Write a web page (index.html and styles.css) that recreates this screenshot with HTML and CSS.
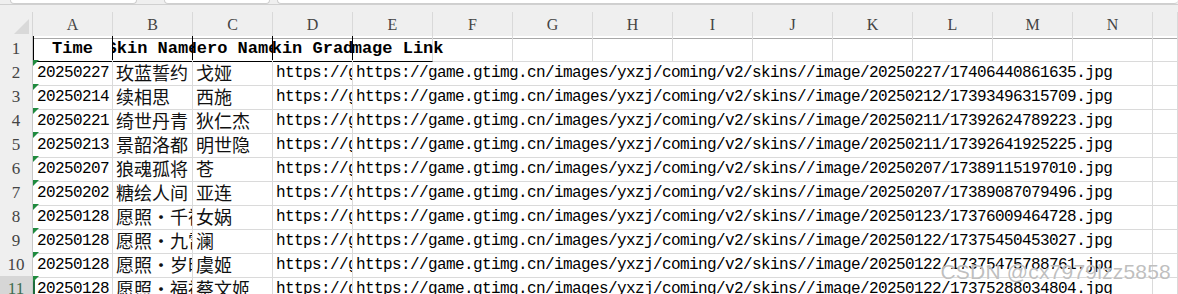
FILE: index.html
```html
<!DOCTYPE html>
<html lang="zh-CN">
<head>
    <meta charset="UTF-8">
    <title>skins.xlsx</title>
    <link rel="stylesheet" href="styles.css">
</head>
<body>
    <div class="tabs">
        <div class="tab tab-1"></div>
        <div class="tab tab-2"></div>
        <div class="tab tab-3"></div>
    </div>

    <div class="sheet" id="sheet">
        <div class="row col-head">
            <div class="corner"><div class="corner-mark"></div></div>
            <div class="ch">A</div>
            <div class="ch">B</div>
            <div class="ch">C</div>
            <div class="ch">D</div>
            <div class="ch">E</div>
            <div class="ch">F</div>
            <div class="ch">G</div>
            <div class="ch">H</div>
            <div class="ch">I</div>
            <div class="ch">J</div>
            <div class="ch">K</div>
            <div class="ch">L</div>
            <div class="ch">M</div>
            <div class="ch">N</div>
            <div class="ch"></div>
        </div>

        <div class="row">
            <div class="rh">1</div>
            <div class="c hd first"><span>Time</span></div>
            <div class="c hd"><span>Skin Name</span></div>
            <div class="c hd"><span>Hero Name</span></div>
            <div class="c hd"><span>Skin Grade</span></div>
            <div class="c hd last"><span>Image Link</span></div>
            <div class="c"></div>
            <div class="c"></div>
            <div class="c"></div>
            <div class="c"></div>
            <div class="c"></div>
            <div class="c"></div>
            <div class="c"></div>
            <div class="c"></div>
            <div class="c"></div>
            <div class="c"></div>
        </div>
    </div>

    <div class="watermark">CSDN @cx7979lzz5858</div>

    <script>
        const rows = [
            ['20250227', '玫蓝誓约', '戈娅', '20250227/17406440861635'],
            ['20250214', '续相思', '西施', '20250212/17393496315709'],
            ['20250221', '绮世丹青', '狄仁杰', '20250211/17392624789223'],
            ['20250213', '景韶洛都', '明世隐', '20250211/17392641925225'],
            ['20250207', '狼魂孤将', '苍', '20250207/17389115197010'],
            ['20250202', '糖绘人间', '亚连', '20250207/17389087079496'],
            ['20250128', '愿照・千禧', '女娲', '20250123/17376009464728'],
            ['20250128', '愿照・九霄', '澜', '20250122/17375450453027'],
            ['20250128', '愿照・岁时', '虞姬', '20250122/17375475788761'],
            ['20250128', '愿照・福禄', '蔡文姬', '20250122/17375288034804']
        ];

        const base = 'https://game.gtimg.cn/images/yxzj/coming/v2/skins//image/';
        const sheet = document.getElementById('sheet');
        let html = '';

        rows.forEach(function(r, i) {
            const n = i + 2;
            const active = n === 11 ? ' active' : '';
            html += `
                <div class="row${active}">
                    <div class="rh">${n}</div>
                    <div class="c num flag">${r[0]}</div>
                    <div class="c cjk">${r[1]}</div>
                    <div class="c cjk">${r[2]}</div>
                    <div class="c url">https://g</div>
                    <div class="c url wide">${base}${r[3]}.jpg</div>
                    <div class="c"></div>
                </div>
            `;
        });

        sheet.insertAdjacentHTML('beforeend', html);
    </script>
</body>
</html>
```

FILE: styles.css
```css
body {
    margin: 0;
    background-color: #ffffff;
    overflow: hidden;
    font-family: "Liberation Mono", monospace;
    color: #000;
}

/* sheet tabs strip at the very top */
.tabs {
    display: flex;
    height: 4px;
    background-color: #efefef;
    border-bottom: 1px solid #d0d0d0;
    overflow: hidden;
}

.tab {
    height: 3px;
    background-color: #ffffff;
    border: 1px solid #cfcfcf;
    border-top: none;
    border-radius: 0 0 6px 6px;
}

.tab-1 {
    margin-left: 10px;
    width: 125px;
}

.tab-2 {
    margin-left: 27px;
    width: 104px;
}

.tab-3 {
    margin-left: 7px;
    flex: 1;
    border-right: none;
}

.sheet {
    background-color: #efefef;
    padding-top: 7px;
}

.row {
    display: grid;
    grid-template-columns: 33px repeat(14, 80px) 1fr;
    height: 24px;
    background-color: #ffffff;
}

/* column letters */
.col-head {
    background-color: #efefef;
}

.corner {
    display: flex;
    justify-content: flex-end;
    align-items: flex-end;
    padding: 0 3px 4px 0;
    border-bottom: 1px solid #a8a8a8;
    border-right: 1px solid #d6d6d6;
}

.corner-mark {
    width: 0;
    height: 0;
    border-left: 15px solid transparent;
    border-bottom: 15px solid #d9d9d9;
}

.ch {
    box-sizing: border-box;
    border-right: 1px solid #d9d9d9;
    border-bottom: 1px solid #a8a8a8;
    font-family: "Liberation Serif", serif;
    font-size: 16px;
    color: #444;
    text-align: center;
    line-height: 26px;
}

/* row numbers */
.rh {
    box-sizing: border-box;
    background-color: #efefef;
    border-right: 1px solid #c8c8c8;
    border-bottom: 1px solid #d9d9d9;
    font-family: "Liberation Serif", serif;
    font-size: 17px;
    color: #444;
    text-align: center;
    line-height: 25px;
}

.active .rh {
    background-color: #d6d6d6;
    color: #3f6b4f;
}

.c {
    position: relative;
    box-sizing: border-box;
    border-right: 1px solid #dadada;
    border-bottom: 1px solid #dadada;
    white-space: nowrap;
    overflow: hidden;
    font-size: 16px;
    letter-spacing: -0.6px;
    line-height: 27px;
    padding-left: 4px;
}

.active .c.num {
    box-shadow: inset 2px 0 0 #1e6b3c;
}

/* header row with black borders */
.hd {
    display: flex;
    justify-content: center;
    padding-left: 0;
    font-size: 17px;
    letter-spacing: 0;
    font-weight: bold;
    line-height: 25px;
    border-right-color: #000;
    border-bottom-color: #000;
}

.hd span {
    flex-shrink: 0;
}

.hd.first {
    box-shadow: inset 1px 0 0 #000;
}

.hd.last {
    border-right-color: #dadada;
    overflow: visible;
    clip-path: inset(0 -40px 0 0);
    z-index: 1;
}

.num {
    padding-left: 4px;
}

.cjk {
    font-family: "Noto Sans CJK SC", sans-serif;
    font-size: 18px;
    letter-spacing: 0;
    line-height: 24px;
    padding-left: 3px;
    color: #111;
}

.url {
    padding-left: 3px;
}

.wide {
    grid-column: span 10;
}

/* number-stored-as-text marker */
.flag::before {
    content: '';
    position: absolute;
    top: 0;
    left: 0;
    width: 0;
    height: 0;
    border-top: 6px solid #1f8a3e;
    border-right: 6px solid transparent;
}

.watermark {
    position: absolute;
    right: 7px;
    bottom: 10px;
    font-family: "Liberation Sans", sans-serif;
    font-size: 21px;
    color: rgba(170, 170, 170, 0.75);
    text-shadow: 0 0 1px #ffffff;
    letter-spacing: 0.2px;
}
```
